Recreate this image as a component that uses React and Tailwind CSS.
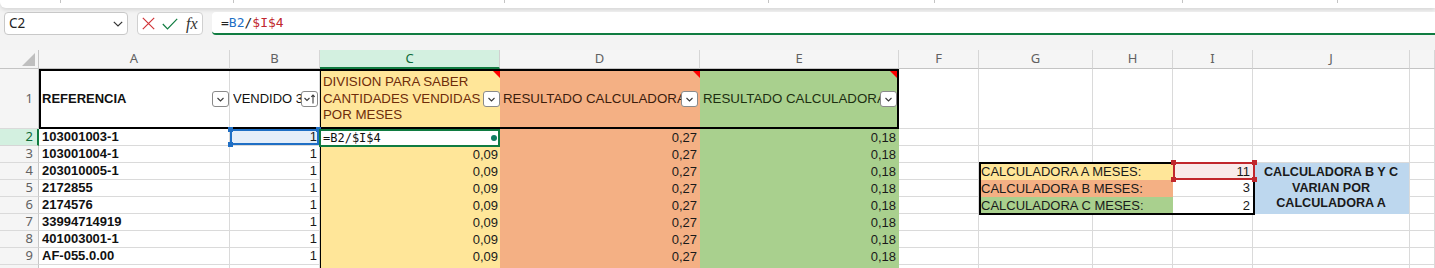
import React from 'react';

const FONT = "font-['Liberation_Sans',Arial,sans-serif] text-[13px] leading-[16px]";
const HEADFONT = "font-['Noto_Sans','Open_Sans',sans-serif] text-[13px]";
const BLANK = "bg-white border-r border-b border-[#dadada]";

function FilterBtn({ sort }) {
  return (
    <div className="w-[17px] h-[16px] shrink-0 bg-white border border-[#8a8a8a] rounded-[3px] flex items-center justify-center">
      <svg width="15" height="14" viewBox="0 0 15 14">
        {sort ? (
          <>
            <path d="M2.5 6 L5 8.5 L7.5 6" fill="none" stroke="#3a3a3a" strokeWidth="1.1" />
            <path d="M11 11.5 V3 M9.3 4.8 L11 3 L12.7 4.8" fill="none" stroke="#3a3a3a" strokeWidth="1.1" />
          </>
        ) : (
          <path d="M4.5 6 L7.5 9 L10.5 6" fill="none" stroke="#3a3a3a" strokeWidth="1.1" />
        )}
      </svg>
    </div>
  );
}

function Comment({ className }) {
  return (
    <div className={"absolute w-0 h-0 border-t-[7px] border-t-[#ff0000] border-l-[7px] border-l-transparent " + className} />
  );
}

function RowHead({ n, active }) {
  if (active) {
    return (
      <div className={"bg-[#d3f0e0] border-r-2 border-r-[#107c41] border-b border-b-[#d6d6d6] flex items-center justify-end pr-[4px] text-[#0e6b38] " + HEADFONT}>
        {n}
      </div>
    );
  }
  return (
    <div className={"bg-[#f5f5f5] border-r border-r-[#c6c6c6] border-b border-b-[#dadada] flex items-center justify-end pr-[5px] text-[#616161] " + HEADFONT}>
      {n}
    </div>
  );
}

function ACell({ children }) {
  return (
    <div className={"bg-white border-r border-b border-[#dadada] flex items-center pl-[3px] font-bold text-[#111] overflow-hidden whitespace-nowrap " + FONT}>
      {children}
    </div>
  );
}

function NumCell({ children, cls }) {
  return (
    <div className={"flex items-center justify-end text-[#1a1a1a] overflow-hidden whitespace-nowrap " + FONT + " " + cls}>
      {children}
    </div>
  );
}

const refs = ['103001004-1', '203010005-1', '2172855', '2174576', '33994714919', '401003001-1', 'AF-055.0.00', 'AF-055.7.00'];

export default function App() {
  const colHeads = [
    { l: 'A' }, { l: 'B' }, { l: 'C', active: true }, { l: 'D' }, { l: 'E' }, { l: 'F' }, { l: 'G' }, { l: 'H' }, { l: 'I' }, { l: 'J' }, { l: '' },
  ];

  return (
    <div className="w-[1435px] h-[268px] overflow-hidden bg-[#f3f3f3]">
      {/* ribbon bottom strip */}
      <div className="h-[8px] bg-white rounded-bl-[6px] shadow-[0_2px_4px_rgba(0,0,0,0.12)] flex">
        <div className="w-[61px] h-[3px] border-r border-[#c4c4c4]" />
        <div className="w-[173px] h-[3px] border-r border-[#c4c4c4]" />
        <div className="w-[271px] h-[3px] border-r border-[#c4c4c4]" />
        <div className="w-[264px] h-[3px] border-r border-[#c4c4c4]" />
        <div className="w-[166px] h-[3px] border-r border-[#c4c4c4]" />
        <div className="w-[248px] h-[3px] border-r border-[#c4c4c4]" />
        <div className="w-[155px] h-[3px] border-r border-[#c4c4c4]" />
      </div>

      {/* formula bar */}
      <div className="flex items-center mt-[4px] h-[23px]">
        <div className="ml-[4px] w-[124px] h-[23px] bg-white border border-[#c8c8c8] rounded-[4px] flex items-center justify-between pl-[4px] pr-[4px]">
          <span className="font-['Noto_Sans','Open_Sans',sans-serif] text-[13.5px] text-[#222]">C2</span>
          <svg width="10" height="6" viewBox="0 0 10 6">
            <path d="M0.8 0.8 L5 5 L9.2 0.8" fill="none" stroke="#333" strokeWidth="1.2" />
          </svg>
        </div>
        <div className="ml-[9px] w-[66px] h-[23px] bg-white border border-[#d0d0d0] rounded-[4px] flex items-center pl-[4px]">
          <svg width="13" height="13" viewBox="0 0 13 13">
            <path d="M0.8 0.8 L12.2 12.2 M12.2 0.8 L0.8 12.2" fill="none" stroke="#d13438" strokeWidth="1.2" />
          </svg>
          <svg width="16" height="12" viewBox="0 0 16 12" className="ml-[7px]">
            <path d="M0.8 6 L5.5 10.8 L15.2 0.8" fill="none" stroke="#107c41" strokeWidth="1.2" />
          </svg>
          <span className="ml-[8px] font-['Liberation_Serif','Times_New_Roman',serif] italic text-[16px] leading-none text-[#333]">fx</span>
        </div>
        <div className="ml-[9px] flex-1 h-[23px] bg-white rounded-l-[4px] border-b-2 border-[#107c41] flex items-center pl-[9px] font-['DejaVu_Sans_Mono',monospace] text-[13px] text-[#222]">
          <span>=</span>
          <span className="text-[#1f6fc5]">B2</span>
          <span>/</span>
          <span className="text-[#c1272d]">$I$4</span>
        </div>
      </div>

      {/* sheet grid */}
      <div className="mt-[15px] grid grid-cols-[39px_191px_90px_180px_200px_199px_80px_114px_80px_80px_157px_1fr] grid-rows-[19px_60px_repeat(9,17px)]">
        {/* column headers */}
        <div className="bg-[#f5f5f5] border-r border-r-[#c6c6c6] border-b border-b-[#c4c4c4] relative">
          <svg width="13" height="13" viewBox="0 0 13 13" className="absolute left-[22px] top-[3px]">
            <path d="M13 0 L13 13 L0 13 Z" fill="#bfbfbf" />
          </svg>
        </div>
        {colHeads.map((c, i) =>
          c.active ? (
            <div key={i} className={"bg-[#d3f0e0] border-r border-r-[#d0d0d0] border-b-2 border-b-[#107c41] flex items-center justify-center text-[#0e6b38] " + HEADFONT}>
              {c.l}
            </div>
          ) : (
            <div key={i} className={"bg-[#f5f5f5] border-r border-r-[#d6d6d6] border-b border-b-[#c4c4c4] flex items-center justify-center text-[#616161] " + HEADFONT}>
              {c.l}
            </div>
          )
        )}

        {/* row 1 */}
        <RowHead n={1} />
        <div className="col-span-5 relative flex">
          <div className={"w-[191px] bg-white border-r border-b border-[#dadada] flex items-center pl-[3px] " + FONT}>
            <span className="flex-1 min-w-0 overflow-hidden whitespace-nowrap font-bold text-[#111]">REFERENCIA</span>
            <FilterBtn />
          </div>
          <div className={"w-[90px] bg-white border-r border-b border-[#dadada] flex items-center pl-[3px] pr-[1px] " + FONT}>
            <span className="flex-1 min-w-0 overflow-hidden whitespace-nowrap text-[#111]">VENDIDO 3 MESES</span>
            <FilterBtn sort />
          </div>
          <div className={"w-[180px] bg-[#ffe699] border-l border-black flex items-center pl-[2px] relative font-['Liberation_Sans',Arial,sans-serif] text-[13.3px] leading-[16.5px]"}>
            <span className="flex-1 min-w-0 overflow-hidden whitespace-nowrap text-[#6e2c0a]">
              DIVISION PARA SABER<br />CANTIDADES VENDIDAS<br />POR MESES
            </span>
            <FilterBtn />
            <Comment className="top-[2px] right-0" />
          </div>
          <div className={"w-[200px] bg-[#f4b084] flex items-center pl-[3px] pr-[2px] relative font-['Liberation_Sans',Arial,sans-serif] text-[13.3px] leading-[16px]"}>
            <span className="flex-1 min-w-0 overflow-hidden whitespace-nowrap text-[#3b1c0c]">RESULTADO CALCULADORA B</span>
            <FilterBtn />
            <Comment className="top-[2px] right-0" />
          </div>
          <div className={"w-[199px] bg-[#a9d08e] flex items-center pl-[3px] pr-[2px] relative font-['Liberation_Sans',Arial,sans-serif] text-[13.3px] leading-[16px]"}>
            <span className="flex-1 min-w-0 overflow-hidden whitespace-nowrap text-[#1c2e10]">RESULTADO CALCULADORA C</span>
            <FilterBtn />
            <Comment className="top-[2px] right-[2px]" />
          </div>
          <div className="absolute inset-0 border-2 border-black pointer-events-none" />
        </div>
        <div className={BLANK} />
        <div className={BLANK} />
        <div className={BLANK} />
        <div className={BLANK} />
        <div className={BLANK} />
        <div className={BLANK} />

        {/* row 2 */}
        <RowHead n={2} active />
        <ACell>103001003-1</ACell>
        <div className={"relative bg-[#e5eef9] border-r border-b border-[#dadada] flex items-center justify-end pr-[2px] text-[#1a1a1a] " + FONT}>
          1
          <div className="absolute inset-0 border-2 border-[#1f6fc5] pointer-events-none">
            <div className="absolute -left-[4px] -top-[4px] w-[5px] h-[5px] bg-[#1f6fc5]" />
            <div className="absolute -right-[4px] -top-[4px] w-[5px] h-[5px] bg-[#1f6fc5]" />
            <div className="absolute -left-[4px] -bottom-[4px] w-[5px] h-[5px] bg-[#1f6fc5]" />
          </div>
        </div>
        <div className="relative bg-white border-l border-black flex items-center pl-[2px] pr-[3px]">
          <span className="flex-1 font-['DejaVu_Sans_Mono',monospace] text-[12px] text-[#111]">=B2/$I$4</span>
          <span className="w-[6px] h-[6px] rounded-full bg-[#0f7d62]" />
          <div className="absolute -left-[2px] top-0 right-0 -bottom-px border-2 border-[#107c41] pointer-events-none" />
        </div>
        <NumCell cls="bg-[#f4b084] pr-[3px]">0,27</NumCell>
        <NumCell cls="bg-[#a9d08e] pr-[3px]">0,18</NumCell>
        <div className={BLANK} />
        <div className={BLANK} />
        <div className={BLANK} />
        <div className={BLANK} />
        <div className={BLANK} />
        <div className={BLANK} />

        {/* rows 3 - 10 */}
        {refs.map((r, i) => {
          const n = i + 3;
          return (
            <React.Fragment key={n}>
              <RowHead n={n} />
              <ACell>{r}</ACell>
              <NumCell cls="bg-white border-r border-b border-[#dadada] pr-[2px]">1</NumCell>
              <NumCell cls="bg-[#ffe699] border-l border-black pr-[2px]">0,09</NumCell>
              <NumCell cls="bg-[#f4b084] pr-[3px]">0,27</NumCell>
              <NumCell cls="bg-[#a9d08e] pr-[3px]">0,18</NumCell>
              <div className={BLANK} />
              {n === 4 && (
                <>
                  <div className={"col-span-3 row-span-3 relative grid grid-cols-[194px_80px] grid-rows-[17px_17px_17px] " + FONT}>
                    <div className="absolute left-0 -top-px -right-[2px] -bottom-px border-2 border-black pointer-events-none" />
                    <div className="bg-[#ffe699] flex items-center pl-[2px] whitespace-nowrap text-[#1a1a1a]">CALCULADORA A MESES:</div>
                    <div className="relative bg-[#f9eaea] flex items-center justify-end pr-[3px] text-[#1a1a1a]">
                      11
                      <div className="absolute left-0 -top-px -right-[2px] bottom-0 border-2 border-[#c1272d] z-10 pointer-events-none">
                        <div className="absolute -left-[4px] -top-[4px] w-[5px] h-[5px] bg-[#c1272d]" />
                        <div className="absolute -right-[4px] -top-[4px] w-[5px] h-[5px] bg-[#c1272d]" />
                        <div className="absolute -left-[4px] -bottom-[4px] w-[5px] h-[5px] bg-[#c1272d]" />
                        <div className="absolute -right-[4px] -bottom-[4px] w-[5px] h-[5px] bg-[#c1272d]" />
                      </div>
                    </div>
                    <div className="bg-[#f4b084] flex items-center pl-[2px] whitespace-nowrap text-[#1a1a1a]">CALCULADORA B MESES:</div>
                    <div className="bg-white border-b border-[#dadada] flex items-center justify-end pr-[3px] text-[#1a1a1a]">3</div>
                    <div className="bg-[#a9d08e] flex items-center pl-[2px] whitespace-nowrap text-[#1a1a1a]">CALCULADORA C MESES:</div>
                    <div className="bg-white flex items-center justify-end pr-[3px] text-[#1a1a1a]">2</div>
                  </div>
                  <div className="row-span-3 bg-[#bdd7ee] border-r border-r-[#dadada] flex items-center justify-center text-center font-['Liberation_Sans',Arial,sans-serif] font-bold text-[12.6px] leading-[15.5px] text-[#1a1a1a]">
                    CALCULADORA B Y C<br />VARIAN POR<br />CALCULADORA A
                  </div>
                  <div className={BLANK} />
                </>
              )}
              {(n === 5 || n === 6) && <div className={BLANK} />}
              {n !== 4 && n !== 5 && n !== 6 && (
                <>
                  <div className={BLANK} />
                  <div className={BLANK} />
                  <div className={BLANK} />
                  <div className={BLANK} />
                  <div className={BLANK} />
                </>
              )}
            </React.Fragment>
          );
        })}
      </div>
    </div>
  );
}
